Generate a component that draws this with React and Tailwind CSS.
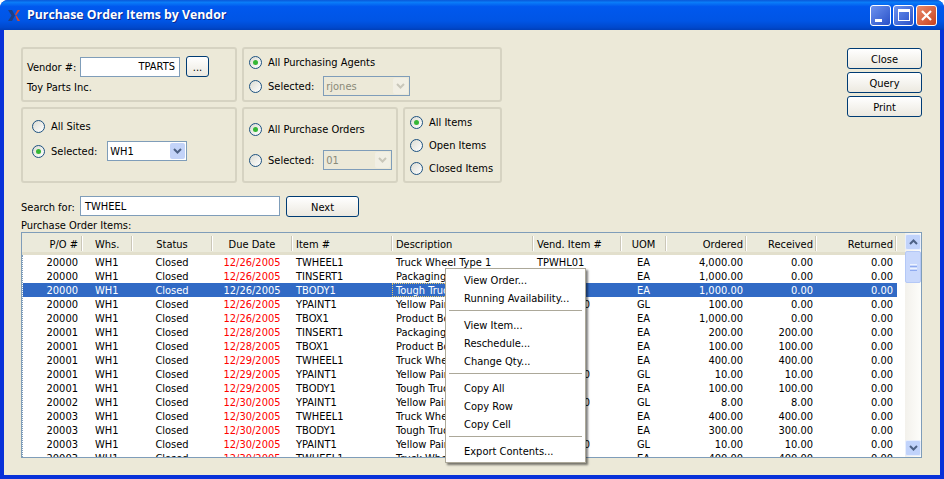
import React from "react";

const cols = [
  { w: "w-[60px]", a: "text-right pr-1" },
  { w: "w-[50px]", a: "pl-[13px]" },
  { w: "w-[80px]", a: "text-center" },
  { w: "w-[80px]", a: "text-center" },
  { w: "w-[100px]", a: "pl-1" },
  { w: "w-[141px]", a: "pl-1" },
  { w: "w-[88px]", a: "pl-1" },
  { w: "w-[45px]", a: "text-center" },
  { w: "w-[80px]", a: "text-right pr-[3px]" },
  { w: "w-[70px]", a: "text-right pr-[3px]" },
  { w: "w-[80px]", a: "text-right pr-[3px]" },
];

const headers = ["P/O #", "Whs.", "Status", "Due Date", "Item #", "Description", "Vend. Item #", "UOM", "Ordered", "Received", "Returned"];

const rows = [
  ["20000", "12/26/2005", "TWHEEL1", "Truck Wheel Type 1", "TPWHL01", "EA", "4,000.00", "0.00"],
  ["20000", "12/26/2005", "TINSERT1", "Packaging Insert", "TPINS01", "EA", "1,000.00", "0.00"],
  ["20000", "12/26/2005", "TBODY1", "Tough Truck Body", "TPBOD01", "EA", "1,000.00", "0.00"],
  ["20000", "12/26/2005", "YPAINT1", "Yellow Paint 1", "TPPAINT10", "GL", "100.00", "0.00"],
  ["20000", "12/26/2005", "TBOX1", "Product Box", "TPBOX01", "EA", "1,000.00", "0.00"],
  ["20001", "12/28/2005", "TINSERT1", "Packaging Insert", "TPINS01", "EA", "200.00", "200.00"],
  ["20001", "12/28/2005", "TBOX1", "Product Box", "TPBOX01", "EA", "100.00", "100.00"],
  ["20001", "12/29/2005", "TWHEEL1", "Truck Wheel Type 1", "TPWHL01", "EA", "400.00", "400.00"],
  ["20001", "12/29/2005", "YPAINT1", "Yellow Paint 1", "TPPAINT10", "GL", "10.00", "10.00"],
  ["20001", "12/29/2005", "TBODY1", "Tough Truck Body", "TPBOD01", "EA", "100.00", "100.00"],
  ["20002", "12/30/2005", "YPAINT1", "Yellow Paint 1", "TPPAINT10", "GL", "8.00", "8.00"],
  ["20003", "12/30/2005", "TWHEEL1", "Truck Wheel Type 1", "TPWHL01", "EA", "400.00", "400.00"],
  ["20003", "12/30/2005", "TBODY1", "Tough Truck Body", "TPBOD01", "EA", "300.00", "300.00"],
  ["20003", "12/30/2005", "YPAINT1", "Yellow Paint 1", "TPPAINT10", "GL", "10.00", "10.00"],
  ["20003", "12/30/2005", "TWHEEL1", "Truck Wheel Type 1", "TPWHL01", "EA", "400.00", "400.00"],
];

function Radio({ on, label }) {
  return (
    <div className="flex items-center gap-[6px]">
      <span className="flex h-[13px] w-[13px] items-center justify-center rounded-full border border-[#1c5180] bg-gradient-to-br from-[#dcdcd3] to-white">
        {on && <span className="h-[5px] w-[5px] rounded-full bg-[#35b735]" />}
      </span>
      <span className="translate-y-px">{label}</span>
    </div>
  );
}

function Combo({ value, width, disabled }) {
  return (
    <div className={`flex h-[20px] items-center justify-between border border-[#7f9db9] pl-[2px] pr-px ${width} ${disabled ? "bg-[#ece9d8] text-[#8a8a78]" : "bg-white"}`}>
      <span className="translate-y-px">{value}</span>
      <span className={`flex h-[16px] w-[15px] items-center justify-center rounded-[2px] ${disabled ? "bg-[#f1efe4]" : "bg-[#c3d3f8]"}`}>
        <svg width="9" height="6" viewBox="0 0 9 6" fill="none">
          <path d="M1 1l3.5 3.5L8 1" stroke={disabled ? "#c9c7ba" : "#4d6185"} strokeWidth="2" />
        </svg>
      </span>
    </div>
  );
}

function Button({ label, className }) {
  return (
    <button className={`rounded-[3px] border border-[#003c74] bg-gradient-to-b from-white to-[#ece9e0] pt-[2px] text-black ${className}`}>
      {label}
    </button>
  );
}

function Group({ className, children }) {
  return <div className={`rounded-[3px] border-2 border-[#d6d3c2] ${className}`}>{children}</div>;
}

function WinButton({ className, children }) {
  return (
    <div className={`flex h-[21px] w-[21px] rounded-[3px] border border-white ${className}`}>
      {children}
    </div>
  );
}

function MenuItem({ label }) {
  return <div className="flex h-[18px] items-center pl-[17px] pt-[2px]">{label}</div>;
}

function MenuSep() {
  return (
    <div className="h-[9px] px-[2px] pt-[3px]">
      <div className="h-px bg-[#aca899]" />
    </div>
  );
}

export default function App() {
  return (
    <div className="relative h-[479px] w-[944px] overflow-hidden bg-white font-['DejaVu_Sans_Condensed','DejaVu_Sans',sans-serif] text-[11px] leading-[14px] text-black">
      <div className="flex h-full flex-col rounded-t-lg bg-[#0831d9]">
        {/* title bar */}
        <div className="flex h-[30px] shrink-0 items-center justify-between rounded-t-lg bg-[linear-gradient(#0a58d8_0%,#0a7cf8_8%,#0058ee_22%,#0055e5_70%,#0048cc_92%,#003fb8_100%)] pl-[8px] pr-[7px]">
          <div className="flex items-center gap-[7px]">
            <svg width="12" height="11" viewBox="0 0 12 11">
              <path d="M0 0h4l3 5.500-3 5.500H0l3.500-5.500z" fill="#1d3f86" />
              <path d="M7 4.500L9.500 0H12L8 5.500zM7.500 6.500L8.500 5.500 12 11H9.500z" fill="#d9492a" />
            </svg>
            <span className="font-['Open_Sans',sans-serif] text-[12.3px] font-bold text-white [text-shadow:1px_1px_0_#0a2a90]">
              Purchase Order Items by Vendor
            </span>
          </div>
          <div className="flex gap-[2px]">
            <WinButton className="items-end justify-start bg-gradient-to-br from-[#6e92ee] to-[#2a50c8] pb-[3px] pl-[4px]">
              <span className="h-[3px] w-[7px] bg-white" />
            </WinButton>
            <WinButton className="items-center justify-center bg-gradient-to-br from-[#6e92ee] to-[#2a50c8]">
              <span className="h-[12px] w-[12px] border border-t-[3px] border-white" />
            </WinButton>
            <WinButton className="items-center justify-center bg-gradient-to-br from-[#ea8a6a] to-[#c8401c]">
              <svg width="13" height="13" viewBox="0 0 13 13">
                <path d="M2 2l9 9M11 2l-9 9" stroke="#fff" strokeWidth="2.200" />
              </svg>
            </WinButton>
          </div>
        </div>

        {/* client area */}
        <div className="mx-[4px] mb-[4px] flex min-h-0 flex-1 flex-col bg-[#ece9d8] pl-[17px] pr-[18px] pt-[17px]">
          <div className="flex items-start justify-between">
            <div className="flex w-[481px] flex-col gap-[5px]">
              <div className="flex gap-[5px]">
                <Group className="h-[55px] w-[216px] pl-[4px] pt-[7px]">
                  <div className="flex items-center">
                    <span className="w-[53px] translate-y-px">Vendor #:</span>
                    <div className="flex h-[20px] w-[100px] items-center justify-end border border-[#7f9db9] bg-white pr-[4px]">TPARTS</div>
                    <Button label="..." className="ml-[6px] h-[21px] w-[23px]" />
                  </div>
                  <div className="mt-[4px]">Toy Parts Inc.</div>
                </Group>
                <Group className="h-[55px] flex-1 pl-[5px] pt-[6px]">
                  <Radio on label="All Purchasing Agents" />
                  <div className="mt-[7px] flex items-center">
                    <Radio label="Selected:" />
                    <div className="ml-[9px]">
                      <Combo value="rjones" width="w-[87px]" disabled />
                    </div>
                  </div>
                </Group>
              </div>
              <div className="flex gap-[5px]">
                <Group className="h-[76px] w-[216px] pl-[9px] pt-[10px]">
                  <Radio label="All Sites" />
                  <div className="mt-[8px] flex items-center">
                    <Radio on label="Selected:" />
                    <div className="ml-[10px]">
                      <Combo value="WH1" width="w-[80px]" />
                    </div>
                  </div>
                </Group>
                <Group className="h-[76px] w-[156px] pl-[5px] pt-[13px]">
                  <Radio on label="All Purchase Orders" />
                  <div className="mt-[14px] flex items-center">
                    <Radio label="Selected:" />
                    <div className="ml-[9px]">
                      <Combo value="01" width="w-[69px]" disabled />
                    </div>
                  </div>
                </Group>
                <Group className="h-[76px] flex-1 pl-[5px] pt-[6px]">
                  <div className="flex flex-col gap-[9px]">
                    <Radio on label="All Items" />
                    <Radio label="Open Items" />
                    <Radio label="Closed Items" />
                  </div>
                </Group>
              </div>
            </div>
            <div className="mt-px flex w-[75px] flex-col gap-[3px]">
              <Button label="Close" className="h-[21px]" />
              <Button label="Query" className="h-[21px]" />
              <Button label="Print" className="h-[21px]" />
            </div>
          </div>

          {/* search */}
          <div className="mt-[13px] flex items-start">
            <span className="w-[59px] pt-[5px]">Search for:</span>
            <div className="flex h-[20px] w-[200px] items-center border border-[#7f9db9] bg-white pl-[4px] pt-[2px]">TWHEEL</div>
            <Button label="Next" className="ml-[6px] h-[21px] w-[73px]" />
          </div>
          <div className="mt-px translate-y-px">Purchase Order Items:</div>

          {/* table */}
          <div className="flex h-[226px] w-[901px] border border-[#7f9db9] bg-white">
            <div className="min-w-0 flex-1 overflow-hidden">
              <div className="flex h-[22px] border-b-[3px] border-[#e2dfcc] bg-[#ebeadb]">
                {headers.map((h, i) => (
                  <div key={h} className={`relative flex items-center ${cols[i].w}`}>
                    <span className={`block w-full pt-[5px] ${cols[i].a}`}>{h}</span>
                    <span className="absolute right-[-1px] top-[3px] h-[15px] w-[2px] border-r border-white bg-[#cbc7b8]" />
                  </div>
                ))}
              </div>
              <div className="border-l border-dotted border-[#7f9db9]">
                {rows.map((r, idx) => {
                  const cells = [r[0], "WH1", "Closed", r[1], r[2], r[3], r[4], r[5], r[6], r[7], "0.00"];
                  const sel = idx === 2;
                  return (
                    <div key={idx} className={`flex h-[14px] w-[874px] whitespace-nowrap ${sel ? "bg-[#316ac5] text-white" : ""}`}>
                      {cells.map((c, i) => (
                        <div
                          key={i}
                          className={`overflow-hidden pt-px ${cols[i].w} ${cols[i].a} ${i === 0 ? "-ml-px" : ""} ${i === 3 && !sel ? "text-[#ff0000]" : ""} ${i === 5 && sel ? "outline-1 -outline-offset-1 outline-dotted outline-[#e8c96a]" : ""}`}
                        >
                          {c}
                        </div>
                      ))}
                    </div>
                  );
                })}
              </div>
            </div>
            {/* scrollbar */}
            <div className="flex w-[16px] shrink-0 flex-col items-stretch bg-gradient-to-r from-[#f3f1ec] to-[#fdfdfa] py-px">
              <div className="flex h-[16px] items-center justify-center rounded-[2px] border border-[#e8eefc] bg-[#c1d3fb]">
                <svg width="9" height="6" viewBox="0 0 9 6" fill="none">
                  <path d="M1 5l3.500-3.500L8 5" stroke="#4d6185" strokeWidth="2" />
                </svg>
              </div>
              <div className="mt-px flex h-[32px] flex-col items-center justify-center gap-px rounded-[2px] border border-[#b4c8f6] bg-[#c9d8fc]">
                <span className="h-px w-[7px] bg-[#eef3fe]" />
                <span className="h-px w-[7px] bg-[#8faaf0]" />
                <span className="h-px w-[7px] bg-[#eef3fe]" />
                <span className="h-px w-[7px] bg-[#8faaf0]" />
              </div>
              <div className="mt-auto flex h-[16px] items-center justify-center rounded-[2px] border border-[#e8eefc] bg-[#c1d3fb]">
                <svg width="9" height="6" viewBox="0 0 9 6" fill="none">
                  <path d="M1 1l3.500 3.500L8 1" stroke="#4d6185" strokeWidth="2" />
                </svg>
              </div>
            </div>
          </div>
        </div>
      </div>

      {/* context menu */}
      <div className="absolute left-[445px] top-[268px] h-[195px] w-[141px] border border-[#aca899] bg-white py-[2px] pl-px pr-px shadow-[2px_2px_2px_rgba(0,0,0,0.5)]">
        <MenuItem label="View Order..." />
        <MenuItem label="Running Availability..." />
        <MenuSep />
        <MenuItem label="View Item..." />
        <MenuItem label="Reschedule..." />
        <MenuItem label="Change Qty..." />
        <MenuSep />
        <MenuItem label="Copy All" />
        <MenuItem label="Copy Row" />
        <MenuItem label="Copy Cell" />
        <MenuSep />
        <MenuItem label="Export Contents..." />
      </div>
    </div>
  );
}
